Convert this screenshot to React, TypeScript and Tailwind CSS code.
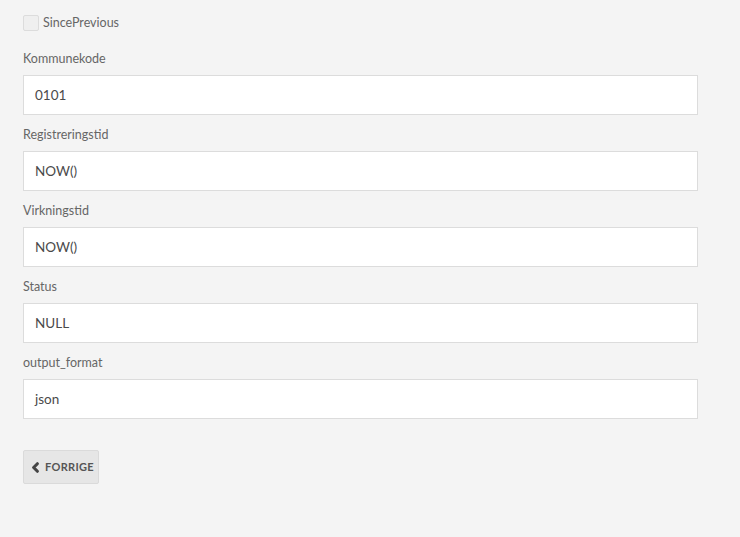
import { ChevronLeft } from 'lucide-react'

const fields = [
  { label: 'Kommunekode', value: '0101' },
  { label: 'Registreringstid', value: 'NOW()' },
  { label: 'Virkningstid', value: 'NOW()' },
  { label: 'Status', value: 'NULL' },
  { label: 'output_format', value: 'json' },
]

export default function App() {
  return (
    <div className="min-h-[537px] bg-[#f4f4f4] px-[23px] pt-[15px] font-['Lato',sans-serif]">
      <label className="flex h-4 items-center gap-[4px]">
        <span className="h-4 w-4 rounded-[2px] border border-[#dcdcdc] bg-[#efefef]" />
        <span className="text-[12.5px] text-[#666]">SincePrevious</span>
      </label>

      <div className="mt-[17px] w-[675px]">
        {fields.map((f) => (
          <div key={f.label} className="mb-[9px]">
            <div className="mb-[7px] h-5 text-[12.5px] leading-[22px] text-[#666]">{f.label}</div>
            <div className="flex h-10 items-center border border-[#dcdcdc] bg-white px-[11px] text-[13.5px] text-[#4a4a4a]">
              {f.value}
            </div>
          </div>
        ))}
      </div>

      <button className="mt-[31px] flex h-[34px] w-[76px] items-center justify-center gap-[2px] rounded-[2px] border border-[#dadada] bg-[#e6e6e6] text-[11px] font-bold tracking-[0.3px] text-[#555]">
        <ChevronLeft size={15} strokeWidth={5} className="text-[#444]" />
        FORRIGE
      </button>
    </div>
  )
}
